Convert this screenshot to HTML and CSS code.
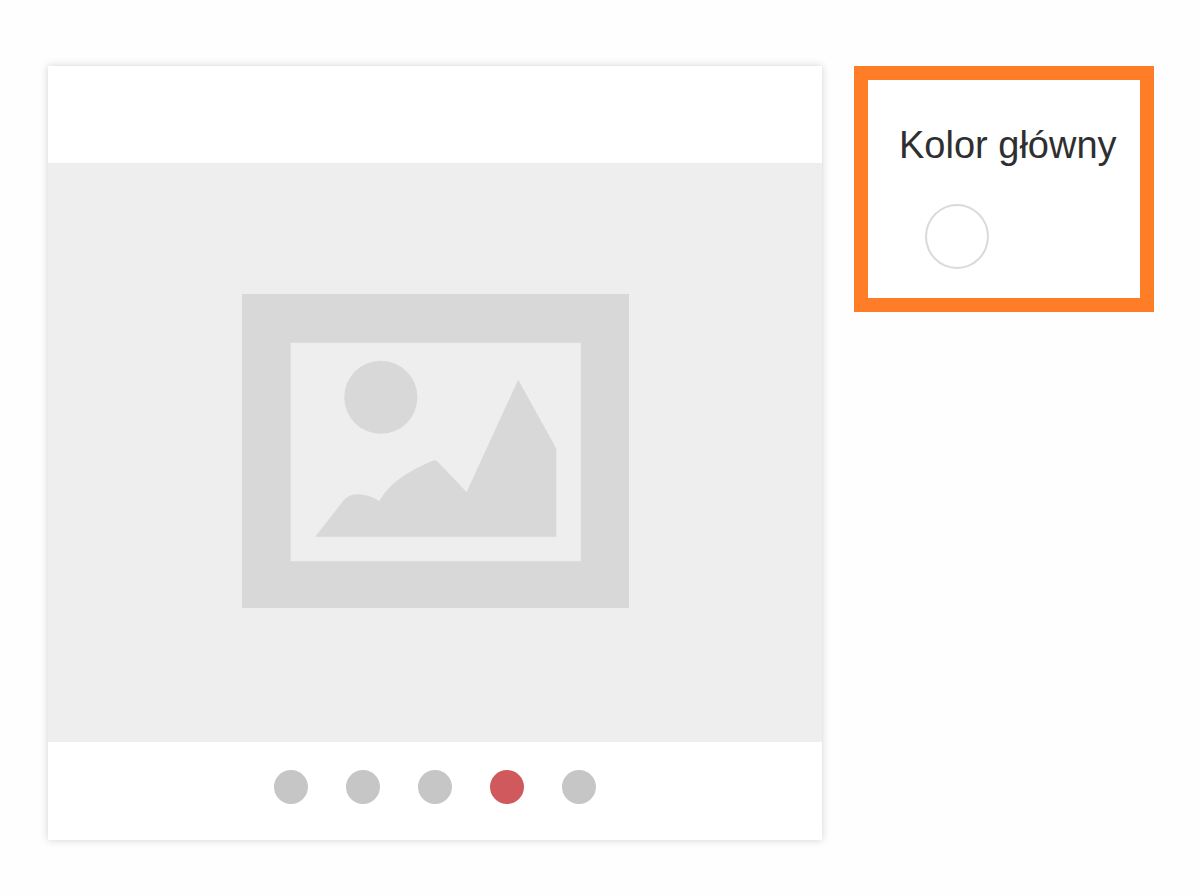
FILE: index.html
```html
<!DOCTYPE html>
<html lang="pl">
<head>
<meta charset="utf-8">
<meta name="viewport" content="width=device-width, initial-scale=1">
<title>Kolor główny</title>
<link rel="stylesheet" href="styles.css">
</head>
<body>
<main class="layout">
  <section class="card" aria-label="Galeria">
    <div class="card-head"></div>
    <div class="card-image">
      <svg class="placeholder" viewBox="0 0 386 314" aria-hidden="true">
        <path fill-rule="evenodd" d="M0 0H386V314H0ZM48.500 48.500V266.500H338V48.500Z"/>
        <circle cx="138.500" cy="103" r="36.500"/>
        <path d="M73 242L98.500 209.500Q104 202 108 201Q122 197 137 206.500Q149 183 192 165.500Q194 166 196 168L224 197.500L275.500 85.500L313.500 154V242Z"/>
      </svg>
    </div>
    <nav class="dots" aria-label="Slajdy">
      <button class="dot" type="button" aria-label="Slajd 1"></button>
      <button class="dot" type="button" aria-label="Slajd 2"></button>
      <button class="dot" type="button" aria-label="Slajd 3"></button>
      <button class="dot dot-active" type="button" aria-label="Slajd 4" aria-current="true"></button>
      <button class="dot" type="button" aria-label="Slajd 5"></button>
    </nav>
  </section>
  <aside class="panel">
    <h2 class="panel-title" id="color-label">Kolor główny</h2>
    <button class="swatch" type="button" aria-labelledby="color-label"></button>
  </aside>
</main>
</body>
</html>
```
FILE: styles.css
```css
* {
  box-sizing: border-box;
}

body {
  margin: 0;
  background: #fefefe;
  font-family: "Liberation Sans", Arial, sans-serif;
}

.layout {
  display: grid;
  grid-template-columns: minmax(0, 1fr) 300px;
  align-items: start;
  gap: 32px;
  padding: 66px 46px 56px 48px;
}

.card {
  background: #fff;
  box-shadow: 0 0 8px rgba(0, 0, 0, 0.18);
}

.card-head {
  height: 97px;
}

.card-image {
  display: flex;
  align-items: center;
  justify-content: center;
  aspect-ratio: 774 / 579;
  padding-bottom: 3px;
  background: #eeeeee;
}

.placeholder {
  width: 50%;
  fill: #d8d8d8;
}

.dots {
  display: flex;
  justify-content: center;
  gap: 38px;
  padding: 28px 0 36px;
}

.dot {
  width: 34px;
  height: 34px;
  padding: 0;
  border: 0;
  border-radius: 50%;
  background: #c6c6c6;
}

.dot-active {
  background: #cf595c;
}

.panel {
  padding: 43px 24px 29px 31px;
  border: 14px solid #ff7d26;
  background: #fff;
}

.panel-title {
  margin: 0 0 37px;
  color: #2f2f31;
  font-size: 38px;
  font-weight: 400;
  line-height: 44px;
  white-space: nowrap;
}

.swatch {
  display: block;
  width: 64px;
  height: 65px;
  margin-left: 26px;
  padding: 0;
  border: 2px solid #dadada;
  border-radius: 50%;
  background: #fff;
}
```
